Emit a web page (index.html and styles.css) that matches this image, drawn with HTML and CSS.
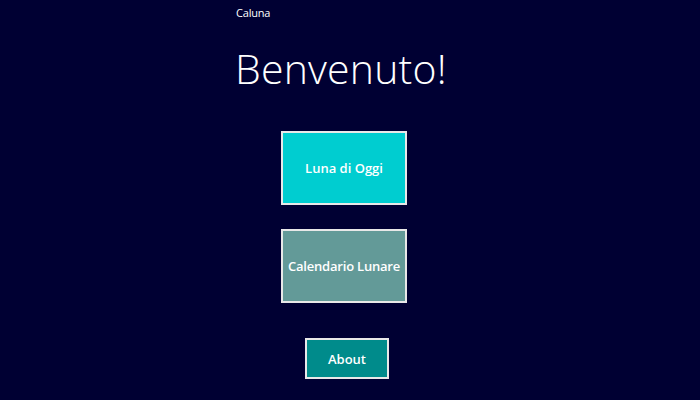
FILE: index.html
```html
<!DOCTYPE html>
<html lang="it">
<head>
<meta charset="utf-8">
<title>Caluna</title>
<link rel="stylesheet" href="styles.css">
</head>
<body>
<div class="app">
  <div class="title">Caluna</div>
  <h1 class="welcome">Benvenuto!</h1>
  <div class="menu">
    <button class="tile tile-today">Luna di Oggi</button>
    <button class="tile tile-calendar">Calendario Lunare</button>
    <button class="about">About</button>
  </div>
</div>
</body>
</html>
```
FILE: styles.css
```css
html, body {
  margin: 0;
  padding: 0;
  background: #000033;
  width: 700px;
  height: 400px;
  overflow: hidden;
}
.app {
  display: flex;
  flex-direction: column;
  padding-left: 236px;
  width: 216px;
  font-family: "Open Sans", "Noto Sans", sans-serif;
  color: #ffffff;
}
.title {
  font-size: 11px;
  line-height: 14px;
  margin-top: 6px;
  letter-spacing: -0.2px;
}
.welcome {
  margin: 24px 0 0 -1px;
  font-size: 41px;
  font-weight: 300;
  line-height: 48px;
  letter-spacing: 0.2px;
}
.menu {
  display: flex;
  flex-direction: column;
  align-items: center;
  margin-top: 39px;
}
.tile, .about {
  box-sizing: border-box;
  border: 2px solid #e8e8e8;
  color: #ffffff;
  font-family: "Open Sans", "Noto Sans", sans-serif;
  font-weight: 600;
  font-size: 13px;
  padding: 0;
  margin: 0;
}
.tile {
  width: 126px;
  height: 74px;
}
.tile-today {
  background: #00cdd0;
}
.tile-calendar {
  background: #639a98;
  margin-top: 24px;
  letter-spacing: -0.2px;
}
.about {
  width: 84px;
  height: 41px;
  background: #008b8b;
  margin-top: 35px;
  margin-left: 6px;
}
```
